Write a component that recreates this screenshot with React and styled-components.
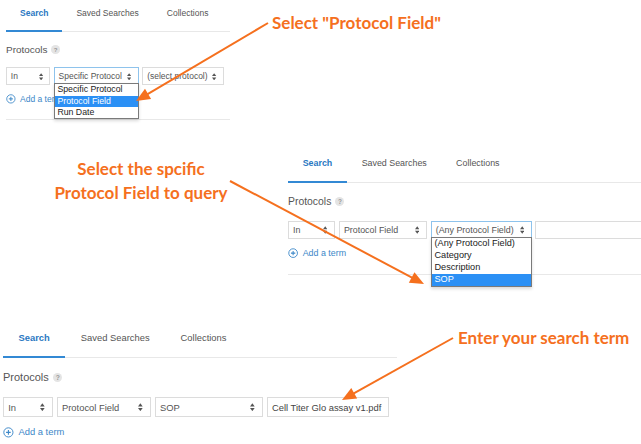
import React from 'react';
import styled, { createGlobalStyle } from 'styled-components';

const GlobalStyle = createGlobalStyle`
  html, body {
    margin: 0;
    padding: 0;
    background: #fff;
  }
  body {
    width: 641px;
    height: 444px;
    overflow: hidden;
    font-family: "Liberation Sans", Arial, sans-serif;
  }
`;

const ORANGE = '#f5701e';

const Page = styled.div`
  position: relative;
  width: 641px;
  height: 444px;
  overflow: hidden;
`;

const Row = styled.div`
  display: flex;
  align-items: flex-start;
  height: ${(p) => p.$height}px;
`;

const Panel = styled.section`
  flex: none;
  font-size: ${(p) => p.$size}px;
  width: ${(p) => p.$width}px;
  margin-left: ${(p) => p.$left}px;
  color: #555;
`;

const TabBar = styled.div`
  display: flex;
  border-bottom: 1px solid #e8e8e8;
`;

const Tab = styled.div`
  padding: 0.95em 1.65em 1.35em;
  line-height: 1.2em;
  margin-bottom: -1px;
  border-bottom: 2px solid ${(p) => (p.$active ? '#3389d4' : 'transparent')};
  color: ${(p) => (p.$active ? '#2a78c2' : '#555')};
  font-weight: ${(p) => (p.$active ? 700 : 400)};
  white-space: nowrap;
`;

const Body = styled.div`
  padding-bottom: 1.75em;
  border-bottom: 1px solid #e8e8e8;
`;

const Heading = styled.div`
  display: flex;
  align-items: center;
  gap: 0.45em;
  height: 1.4em;
  margin-top: 1.4em;
`;

const Title = styled.span`
  font-size: 1.17em;
  line-height: 1;
  color: #555;
`;

const Help = styled.span`
  display: inline-flex;
  align-items: center;
  justify-content: center;
  width: 1.4em;
  height: 1.4em;
  border-radius: 50%;
  background: #e4e4e4;
  color: #999;
  font-size: 0.72em;
  font-weight: 700;
`;

const FieldRow = styled.div`
  display: flex;
  gap: 0.42em;
  margin-top: 1.4em;
  white-space: nowrap;
`;

const Box = styled.div`
  position: relative;
  flex: none;
  box-sizing: border-box;
  width: ${(p) => p.$w}em;
  height: 2.1em;
  display: flex;
  align-items: center;
  justify-content: space-between;
  padding: 0 0.75em 0 0.45em;
  background: #fff;
  border: 1px solid ${(p) => (p.$focus ? '#8ec3ec' : '#dcdcdc')};
  color: ${(p) => (p.$dark ? '#444' : '#555')};
`;

const Caret = styled.svg`
  flex: none;
  width: 0.5em;
  height: 0.9em;
`;

const Menu = styled.ul`
  position: absolute;
  top: 100%;
  left: -1px;
  right: -1px;
  z-index: 2;
  margin: -1px 0 0;
  padding: 0;
  list-style: none;
  font-size: 1.03em;
  background: #fff;
  border: 1px solid #7a7a7a;
  box-shadow: 0 2px 3px rgba(0, 0, 0, 0.15);
`;

const MenuItem = styled.li`
  padding: 0 0.3em;
  line-height: 1.3em;
  background: ${(p) => (p.$selected ? '#2b90f5' : 'transparent')};
  color: ${(p) => (p.$selected ? '#fff' : '#222')};
`;

const AddTerm = styled.div`
  display: flex;
  align-items: center;
  gap: 0.5em;
  margin-top: 1em;
  line-height: 1.2em;
  color: #3b87c8;
  white-space: nowrap;
`;

const PlusIcon = styled.svg`
  flex: none;
  width: 1.15em;
  height: 1.15em;
`;

const Callout = styled.div`
  flex: none;
  font-family: Lato, "Open Sans", sans-serif;
  font-weight: 700;
  font-size: 17px;
  line-height: 24px;
  color: ${ORANGE};
  margin-top: ${(p) => p.$top}px;
  margin-left: ${(p) => p.$left || 0}px;
  width: ${(p) => (p.$width ? `${p.$width}px` : 'auto')};
  text-align: ${(p) => (p.$center ? 'center' : 'left')};
  white-space: nowrap;
`;

const Overlay = styled.svg`
  position: absolute;
  left: 0;
  top: 0;
  z-index: 5;
  pointer-events: none;
`;

const Updown = () => (
  <Caret viewBox="0 0 6 10">
    <polygon points="3,0 6,4 0,4" fill="#555" />
    <polygon points="0,6 6,6 3,10" fill="#555" />
  </Caret>
);

const Select = ({ w, value, focus, options, selected }) => (
  <Box $w={w} $focus={focus}>
    <span>{value}</span>
    <Updown />
    {options && (
      <Menu>
        {options.map((o) => (
          <MenuItem key={o} $selected={o === selected}>
            {o}
          </MenuItem>
        ))}
      </Menu>
    )}
  </Box>
);

const SearchPanel = ({ size, width, left, fields }) => (
  <Panel $size={size} $width={width} $left={left}>
    <TabBar>
      <Tab $active>Search</Tab>
      <Tab>Saved Searches</Tab>
      <Tab>Collections</Tab>
    </TabBar>
    <Body>
      <Heading>
        <Title>Protocols</Title>
        <Help>?</Help>
      </Heading>
      <FieldRow>
        {fields.map((f, i) =>
          f.input ? (
            <Box key={i} $w={f.w} $dark>
              <span>{f.value}</span>
            </Box>
          ) : (
            <Select key={i} {...f} />
          )
        )}
      </FieldRow>
      <AddTerm>
        <PlusIcon viewBox="0 0 16 16">
          <circle cx="8" cy="8" r="6.8" fill="none" stroke="#3b87c8" strokeWidth="1.4" />
          <path d="M8 4.6v6.8M4.6 8h6.8" stroke="#3b87c8" strokeWidth="1.6" />
        </PlusIcon>
        Add a term
      </AddTerm>
    </Body>
  </Panel>
);

const Arrow = ({ x1, y1, x2, y2 }) => {
  const len = Math.hypot(x2 - x1, y2 - y1);
  const ux = (x2 - x1) / len;
  const uy = (y2 - y1) / len;
  const bx = x2 - ux * 14;
  const by = y2 - uy * 14;
  const head = [
    [x2, y2],
    [bx - uy * 6, by + ux * 6],
    [bx + uy * 6, by - ux * 6],
  ]
    .map((p) => p.join(','))
    .join(' ');
  return (
    <g>
      <line x1={x1} y1={y1} x2={bx + ux * 2} y2={by + uy * 2} stroke={ORANGE} strokeWidth="2" />
      <polygon points={head} fill={ORANGE} />
    </g>
  );
};

const first = [
  { w: 5.2, value: 'In' },
  {
    w: 10,
    value: 'Specific Protocol',
    focus: true,
    options: ['Specific Protocol', 'Protocol Field', 'Run Date'],
    selected: 'Protocol Field',
  },
  { w: 9.6, value: '(select protocol)' },
];

const second = [
  { w: 5.3, value: 'In' },
  { w: 9.9, value: 'Protocol Field' },
  {
    w: 11.35,
    value: '(Any Protocol Field)',
    focus: true,
    options: ['(Any Protocol Field)', 'Category', 'Description', 'SOP'],
    selected: 'SOP',
  },
  { w: 13, value: '', input: true },
];

const third = [
  { w: 5.3, value: 'In' },
  { w: 10, value: 'Protocol Field' },
  { w: 11.5, value: 'SOP' },
  { w: 13, value: 'Cell Titer Glo assay v1.pdf', input: true },
];

export default function App() {
  return (
    <Page>
      <GlobalStyle />
      <Row $height={150}>
        <SearchPanel size={8.5} width={224} left={6} fields={first} />
        <Callout $top={11} $left={42}>
          Select "Protocol Field"
        </Callout>
      </Row>
      <Row $height={173}>
        <Callout $top={7} $width={282} $center>
          Select the spcific
          <br />
          Protocol Field to query
        </Callout>
        <SearchPanel size={8.9} width={353} left={6} fields={second} />
      </Row>
      <Row $height={121}>
        <SearchPanel size={9.4} width={394} left={3} fields={third} />
        <Callout $top={3} $left={61}>
          Enter your search term
        </Callout>
      </Row>
      <Overlay width="641" height="444" viewBox="0 0 641 444">
        <Arrow x1={268} y1={23} x2={136} y2={101} />
        <Arrow x1={230} y1={181} x2={424} y2={284} />
        <Arrow x1={453} y1={338} x2={342} y2={400} />
      </Overlay>
    </Page>
  );
}
